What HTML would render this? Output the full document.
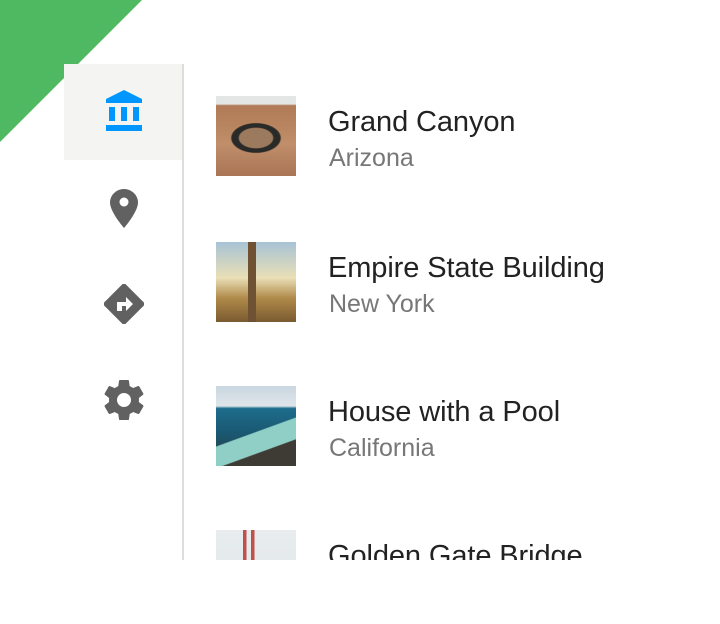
<!DOCTYPE html>
<html><head><meta charset="utf-8"><style>
*{margin:0;padding:0;box-sizing:border-box}
body{width:720px;height:624px;background:#fff;position:relative;overflow:hidden;font-family:"Liberation Sans",sans-serif}
.tri{position:absolute;left:0;top:0;width:0;height:0;border-top:142px solid #4fb962;border-right:142px solid transparent}
.side{position:absolute;left:64px;top:64px;width:120px;height:496px;border-right:2px solid #ddd}
.act{position:absolute;left:0;top:0;width:118px;height:96px;background:#f4f4f3}
.ic{position:absolute;left:104px}
.list{position:absolute;left:216px;top:0;width:504px;height:560px;overflow:hidden}
.it{position:absolute;left:0;height:80px;width:504px}
.img{position:absolute;left:0;top:0;width:80px;height:80px}
.t{position:absolute;left:112px;top:10px;font-size:29px;color:#222;white-space:nowrap;letter-spacing:-0.1px}
.s{position:absolute;left:113px;top:48px;font-size:25px;color:#777;white-space:nowrap}
</style></head><body>
<div class="tri"></div>
<div class="side"><div class="act"></div></div>
<svg class="ic" style="top:89px" width="40" height="44" viewBox="0 0 40 44"><path d="M20 1 L38 10 L38 14 L2 14 L2 10 Z" fill="#0096ff"/><rect x="5" y="18" width="6" height="14" fill="#0096ff"/><rect x="17" y="18" width="6" height="14" fill="#0096ff"/><rect x="29" y="18" width="6" height="14" fill="#0096ff"/><rect x="2" y="36" width="36" height="6" fill="#0096ff"/></svg>
<svg class="ic" style="top:188px" width="40" height="42" viewBox="0 0 40 42"><path d="M20 1C12.5 1 6 7 6 14.5 6 24 20 40 20 40S34 24 34 14.5C34 7 27.5 1 20 1Z" fill="#616161"/><circle cx="20" cy="14" r="4.5" fill="#fff"/></svg>
<svg class="ic" style="top:284px" width="40" height="40" viewBox="0 0 40 40"><path d="M20 0 L40 20 L20 40 L0 20 Z" fill="#616161" stroke="#616161" stroke-width="2" stroke-linejoin="round"/><path d="M13 27 V18 H22 V13 L29 20 L22 27 V22 H18 V27 Z" fill="#fff"/></svg>
<svg class="ic" style="top:380px" width="40" height="40" viewBox="2 2 20 20"><path fill="#616161" d="M19.4 13c.04-.3.1-.7.1-1s-.03-.7-.08-1l2.1-1.65c.2-.15.25-.42.12-.64l-2-3.460c-.12-.22-.39-.3-.61-.22l-2.5 1c-.52-.4-1.08-.73-1.690-.98l-.38-2.65C14.460 2.180 14.250 2 14 2h-4c-.25 0-.46.18-.49.42l-.38 2.650c-.61.25-1.170.59-1.690.98l-2.490-1c-.23-.09-.49 0-.61.22l-2 3.460c-.13.22-.07.49.12.64L4.570 11c-.04.32-.07.65-.07 1s.03.68.07 1l-2.110 1.650c-.19.15-.24.42-.12.64l2 3.460c.12.22.39.3.61.22l2.490-1c.52.4 1.080.73 1.690.98l.38 2.650c.03.24.24.42.49.42h4c.25 0 .46-.18.49-.42l.38-2.650c.61-.25 1.170-.59 1.690-.98l2.490 1c.23.09.49 0 .61-.22l2-3.460c.12-.22.07-.49-.12-.64L19.4 13zM12 15.5c-1.930 0-3.5-1.570-3.5-3.5s1.570-3.5 3.5-3.5 3.5 1.570 3.5 3.5-1.570 3.5-3.5 3.5z"/></svg>
<div class="list">
<div class="it" style="top:96px"><div class="img" style="background:radial-gradient(ellipse 30px 18px at 40px 42px,#9c7a5e 0 55%,#2a2a28 60% 80%,transparent 85%),linear-gradient(#e4e6e6 0 10%,#b07a56 12%,#c08e6a 60%,#a97556)"></div><div class="t">Grand Canyon</div><div class="s">Arizona</div></div>
<div class="it" style="top:242px"><div class="img" style="background:linear-gradient(90deg,transparent 0 40%,#6e5233 40% 50%,transparent 50%),linear-gradient(#a8c3d6 0,#e9dfb6 45%,#b08a4a 70%,#7a5a30)"></div><div class="t">Empire State Building</div><div class="s">New York</div></div>
<div class="it" style="top:386px"><div class="img" style="background:linear-gradient(160deg,transparent 0 55%,#8fcfc6 56% 75%,#3d3b33 76%),linear-gradient(#c9d6e0 0,#dfe6ea 25%,#1d6d8c 28%,#1a5770 60%,#2b3a3a)"></div><div class="t">House with a Pool</div><div class="s">California</div></div>
<div class="it" style="top:530px"><div class="img" style="background:linear-gradient(90deg,transparent 0 34%,#c0504a 34% 38%,transparent 38% 44%,#c0504a 44% 48%,transparent 48%),linear-gradient(#e8ecee,#dfe6ea)"></div><div class="t">Golden Gate Bridge</div><div class="s">San Francisco</div></div>
</div>
</body></html>
